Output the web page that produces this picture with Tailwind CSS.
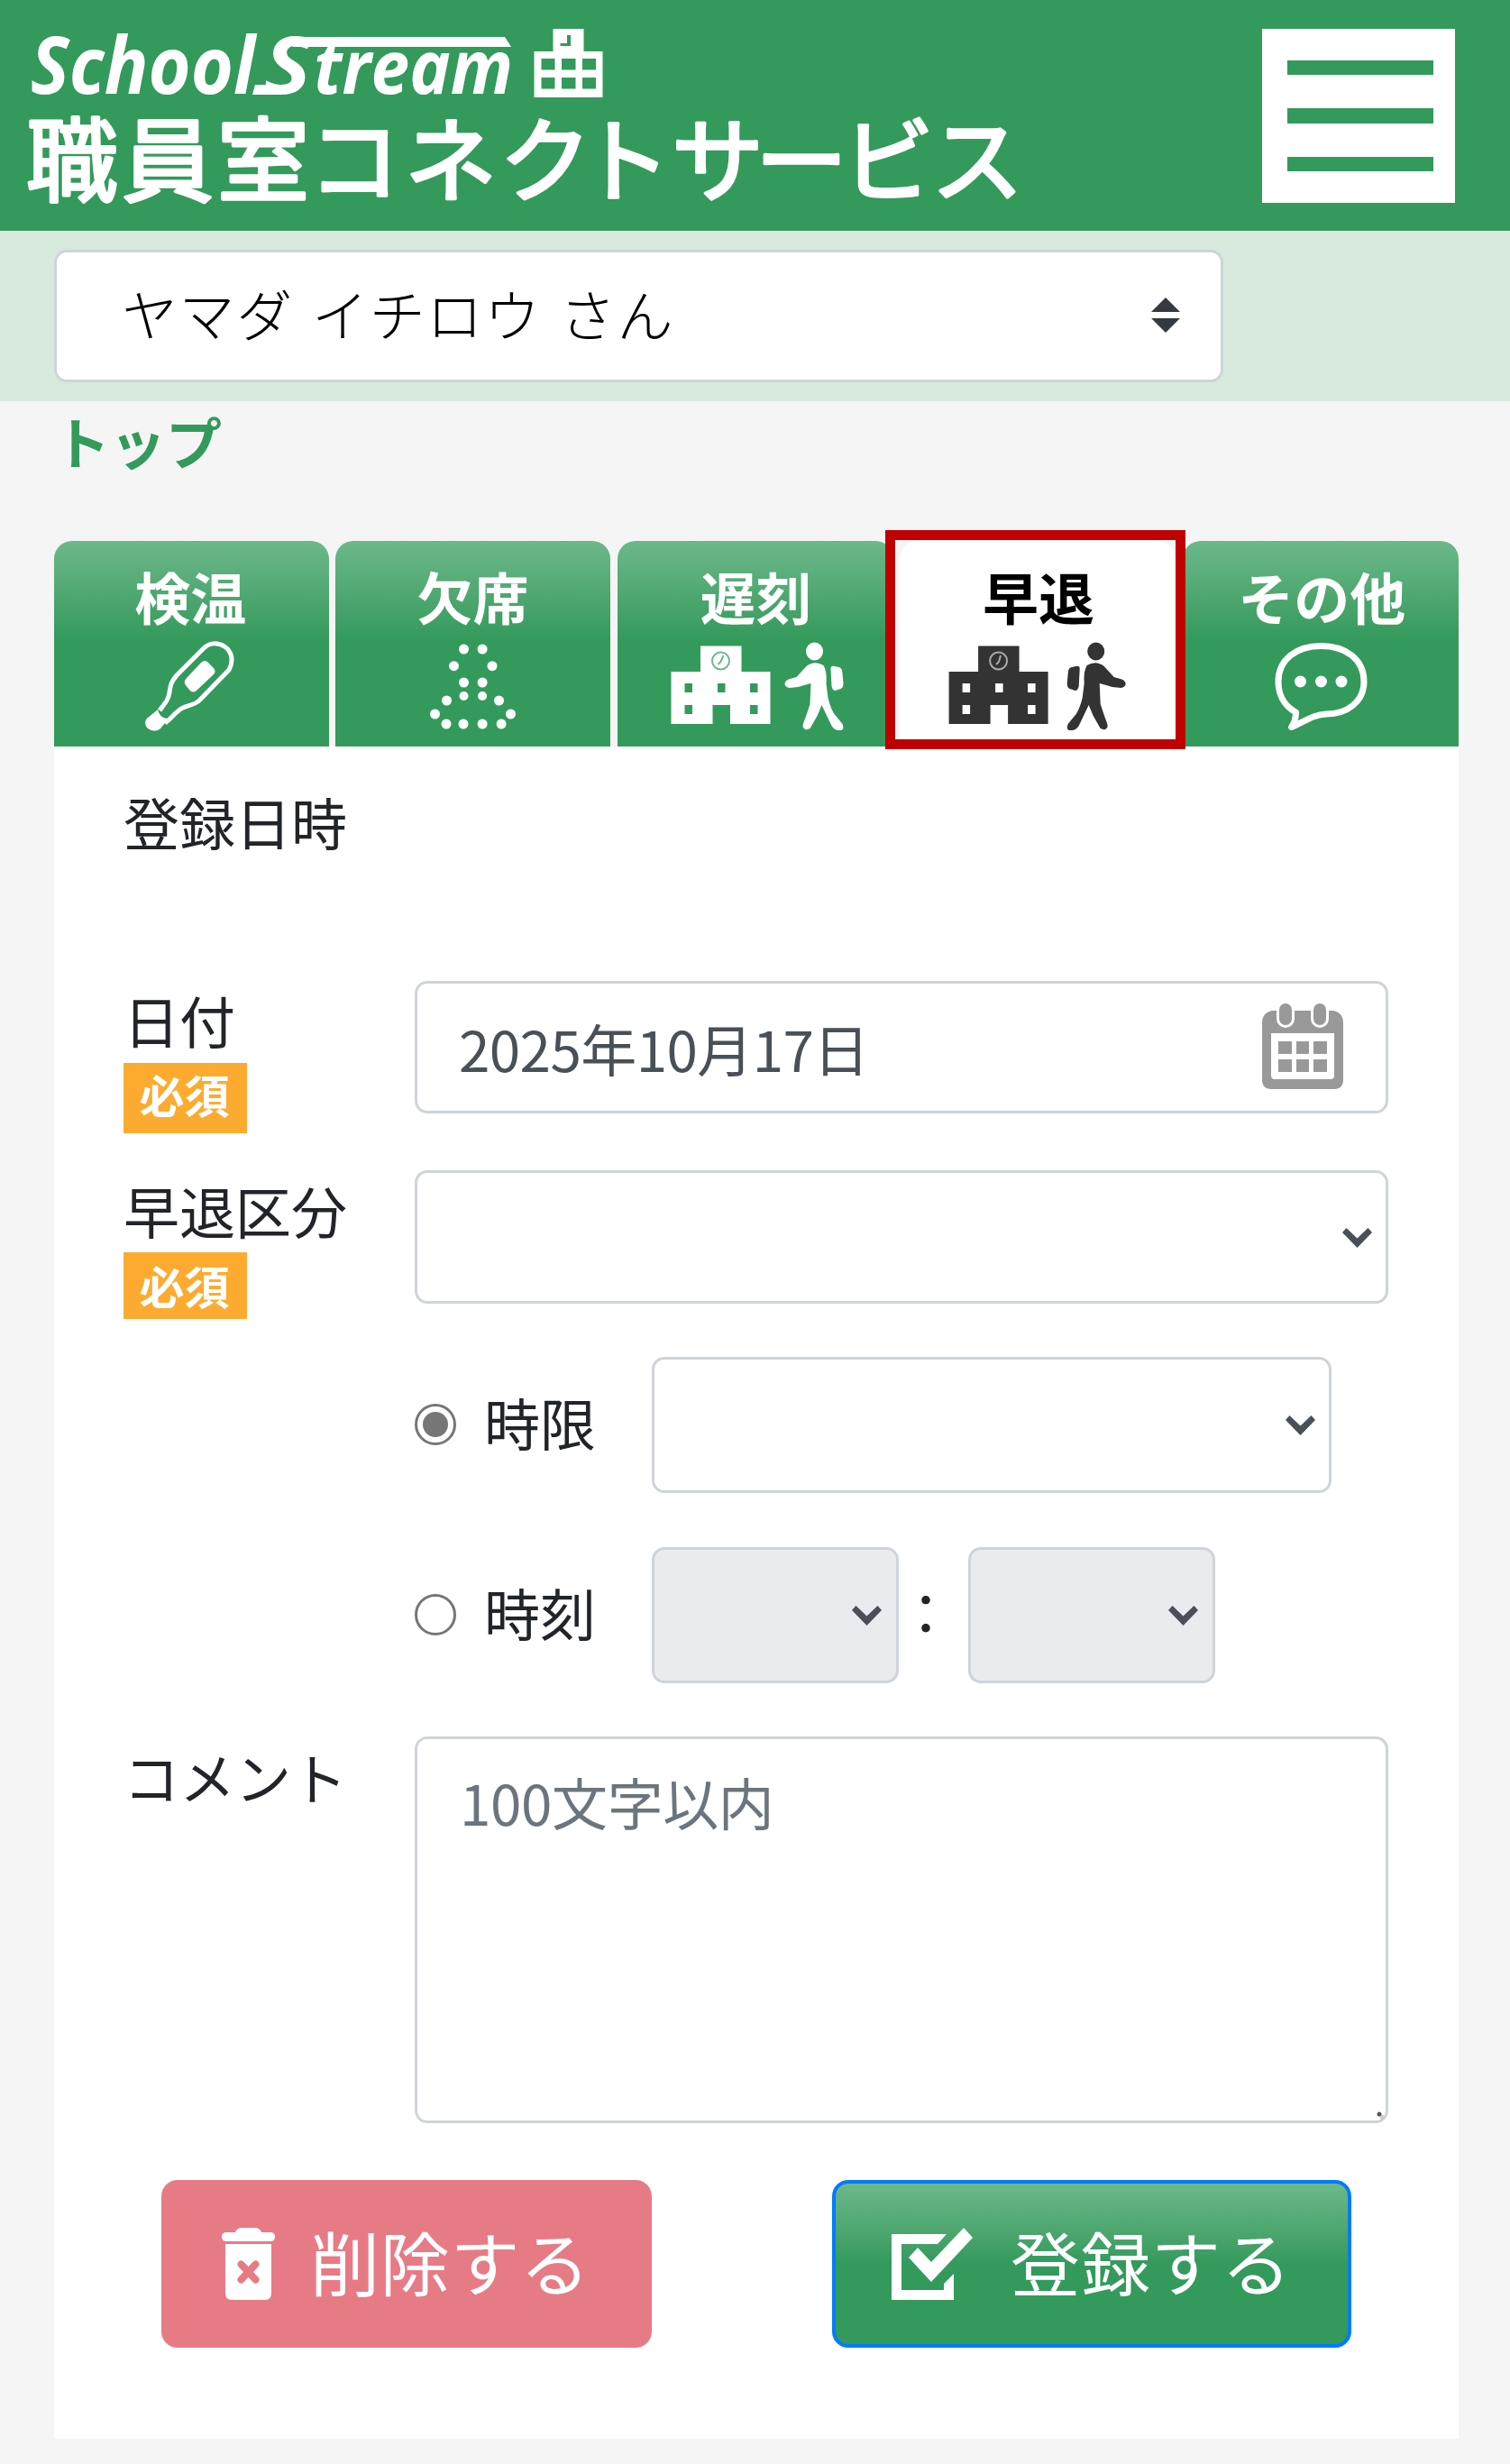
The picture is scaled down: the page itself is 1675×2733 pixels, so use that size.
<!DOCTYPE html>
<html lang="ja">
<head>
<meta charset="utf-8">
<title>職員室コネクトサービス</title>
<script src="https://cdn.jsdelivr.net/npm/@tailwindcss/browser@4"></script>
</head>
<body class="bg-[#f5f5f5] font-['Noto_Sans_CJK_JP',sans-serif] text-[62px] leading-[62px] text-[#212529] w-[1675px] h-[2733px] overflow-hidden">

<header class="bg-[#339a5c] h-[256px] flex items-start justify-between pr-[61px]">
  <svg class="w-[1180px] h-[256px]" viewBox="0 0 1180 256" fill="#fff">
    <g font-family="Open Sans" font-weight="700" font-style="italic" font-size="88">
      <text x="34" y="104" textLength="249" lengthAdjust="spacingAndGlyphs">School</text>
      <text x="293" y="104" textLength="52" lengthAdjust="spacingAndGlyphs">S</text>
      <text x="348" y="104" font-size="82" textLength="221" lengthAdjust="spacingAndGlyphs">tream</text>
    </g>
    <path d="M328 41H560L567 52H325ZM283 94H312V105H280Z"/>
    <path fill-rule="evenodd" d="M613.500 32H647.500V57H668.500V108H592.500V57H613.500ZM600.500 65V77.500H615.500V65ZM623 65V77.500H638.500V65ZM646 65V77.500H661V65ZM600.500 86V98.500H615.500V86ZM623 86V98.500H638.500V86ZM646 86V98.500H661V86ZM629 39V48H621.500V51H633V39Z"/>
    <text y="215.500" x="29 135 241 342 449 554 642 745 838 934 1033" font-family="Noto Sans CJK JP" font-weight="400" font-size="102" stroke="#fff" stroke-width="3.500" stroke-linejoin="round">職員室コネクトサービス</text>
  </svg>
  <button class="mt-[32px] w-[214px] h-[193px] bg-white flex flex-col items-center justify-center gap-[37px] pl-[3px]" aria-label="メニュー">
    <span class="w-[162px] h-[16.500px] bg-[#339a5c]"></span>
    <span class="w-[162px] h-[16.500px] bg-[#339a5c]"></span>
    <span class="w-[162px] h-[16.500px] bg-[#339a5c]"></span>
  </button>
</header>

<div class="bg-[#d7eadd] h-[189px] pt-[21px] pl-[60px]">
  <div class="w-[1297px] h-[147px] bg-white border-[3px] border-[#ced4da] rounded-[14px] flex items-center justify-between pl-[72px] pr-[45px]">
    <span class="text-black font-light whitespace-nowrap tracking-[1.600px] [word-spacing:5px] -mt-[8px]">ヤマダ イチロウ さん</span>
    <svg class="w-[32px] h-[39px] -mt-[3px]" viewBox="0 0 32 39" fill="#343a40"><path d="M16 0L32 16H0ZM16 39L32 23H0Z"/></svg>
  </div>
</div>

<nav class="h-[155px] pl-[60px] pt-[13px]">
  <a class="block h-[62px] font-bold text-[#339a5c]">トップ</a>
</nav>

<div class="ml-[60px] w-[1558px] grid grid-cols-[304.5px_305px_306px_306px_1fr] gap-[7.500px] h-[228px] font-bold text-white text-center relative">
  <div class="rounded-t-[20px] bg-linear-to-b from-[#6cb88a] to-[#339a5c] to-48% pt-[30px]">
    <div class="pr-[2px]">検温</div>
    <svg class="block mt-[10px] w-[305px] h-[126px]" viewBox="0 0 305 126" fill="none" stroke="#fff" stroke-width="5" stroke-linejoin="round">
      <path d="M117 86C123 78 127 74 128 66C129 58 130 54 136 47L166 17C172 11 181 10 189 15C198 21 199 32 194 41L162 74C157 80 149 80 143 83C136 86 131 94 123 100"/>
      <path fill="#fff" stroke="none" d="M115 85C117 93 122 95 127 95L118 106C113 110 107 109 103 105C100 101 101 96 104 94ZM163 33Q167 29 171 33L177 39Q180 43 177 46L159 63Q154 68 150 63L146 58Q143 54 147 50Z"/>
    </svg>
  </div>
  <div class="rounded-t-[20px] bg-linear-to-b from-[#6cb88a] to-[#339a5c] to-48% pt-[30px]">
    <div>欠席</div>
    <svg class="block mt-[10px] w-[305px] h-[126px]" viewBox="-0.5 0 305 126" fill="#fff">
      <circle cx="142" cy="18" r="5.500"/><circle cx="162.600" cy="18" r="5.500"/>
      <circle cx="131" cy="36.700" r="5.500"/><circle cx="173.500" cy="36.700" r="5.500"/>
      <circle cx="142" cy="55" r="5.500"/><circle cx="162.600" cy="55" r="5.500"/>
      <circle cx="142" cy="70" r="5"/><circle cx="162.600" cy="70" r="5"/>
      <circle cx="123" cy="75" r="5.500"/><circle cx="181" cy="75" r="5.500"/>
      <circle cx="110" cy="90" r="5.500"/><circle cx="194" cy="90" r="5.500"/>
      <circle cx="122.500" cy="101" r="5.500"/><circle cx="141.500" cy="101" r="5.500"/><circle cx="162.600" cy="101" r="5.500"/><circle cx="183.600" cy="101" r="5.500"/>
    </svg>
  </div>
  <div class="rounded-t-[20px] bg-linear-to-b from-[#6cb88a] to-[#339a5c] to-48% pt-[30px]">
    <div class="pl-[2px]">遅刻</div>
    <svg class="block mt-[10px] w-[305px] h-[126px]" viewBox="-0.5 0 305 126" fill="#fff">
      <path id="school" fill-rule="evenodd" d="M91.500 14.500H137V43H169V101H124.500V80H105V101H59V43H91.500ZM74 56V66H82.500V56ZM110.500 56V66H119V56ZM146.500 56V66H155V56ZM74 80V90H82.500V80ZM146.500 80V90H155V80Z"/>
      <g fill="none" stroke="#6cb88a" stroke-width="2"><circle cx="114" cy="31" r="9.500"/><path d="M117 25L114 32L111 35"/></g>
      <g id="walker">
        <ellipse cx="218" cy="20.500" rx="9.500" ry="10"/>
        <path d="M209 37Q218 30 228 36Q232 43 231 56L233 72Q236 84 240 90L249 101Q252 109 245 108Q240 108 237 103L226 80L221 92L213 106Q207 109 205 104Q205 101 208 94L213 79L214 56Q206 58 200 60L190 61Q185 60 185 56Q186 52 191 51L198 49Z"/>
        <path d="M236 40Q236 36 240 37L245 38Q249 39 249 45L250 56Q250 61 247 62L241 64Q238 64 237 59Z"/>
      </g>
    </svg>
  </div>
  <div class="rounded-t-[20px] bg-white text-black pt-[30px]">
    <div class="pl-[2px]">早退</div>
    <svg class="block mt-[10px] w-[305px] h-[126px]" viewBox="1 0 305 126" fill="#333">
      <use href="#school" x="-3.400"/>
      <g fill="none" stroke="#aaa" stroke-width="2"><circle cx="110.600" cy="31" r="9.500"/><path d="M113 25L111 32L108 35"/></g>
      <use href="#walker" transform="translate(436.700 0) scale(-1 1)"/>
    </svg>
  </div>
  <div class="rounded-t-[20px] bg-linear-to-b from-[#6cb88a] to-[#339a5c] to-48% pt-[30px]">
    <div class="pl-[3px]">その他</div>
    <svg class="block mt-[10px] w-[305px] h-[126px]" viewBox="1.5 0 305 126">
      <path fill="none" stroke="#fff" stroke-width="7" stroke-linejoin="round" d="M127 88C112 80 107.500 66 107.500 54C107.500 29 128 14.500 155 14.500S202.500 29 202.500 54C202.500 77 183 90 161 90C145 91 138 98 122 104.500C126 99 127 94 127 88Z"/>
      <g fill="#fff"><circle cx="132" cy="54" r="6.500"/><circle cx="155" cy="54" r="6.500"/><circle cx="177.500" cy="54" r="6.500"/></g>
    </svg>
  </div>
  <!-- highlight frame over the current tab -->
  <div class="absolute left-[922px] top-[-12px] w-[333px] h-[243px] border-[11px] border-[#c00000]"></div>
</div>

<main class="ml-[60px] w-[1558px] h-[1877px] bg-white pt-[52px] pl-[77px]">
  <div class="h-[208px]">登録日時</div>

  <div class="flex h-[169px]">
    <div class="w-[323px] pt-[12px]">
      <div>日付</div>
      <div class="mt-[17px] w-[137px] h-[78px] bg-[#fcab30] text-white font-bold text-[50px] leading-[68px] text-center pr-[2px]">必須</div>
    </div>
    <div class="w-[1080px] h-[147px] border-[3px] border-[#ced4da] rounded-[14px] flex items-center justify-between pl-[46px] pr-[47px] text-[#495057]">
      <span class="tracking-[-0.600px]">2025年10月17日</span>
      <svg class="w-[90px] h-[95px] -mt-[3px]" viewBox="0 0 90 95" fill="#999">
        <path fill-rule="evenodd" d="M11 8H79Q90 10 90 22V84Q90 95 80 95H10Q0 95 0 84V22Q0 10 11 8ZM10 33V80Q10 84 14 84H76Q80 84 80 80V33Z"/>
        <g stroke="#fff" stroke-width="3"><rect x="17.500" y="-1.500" width="17" height="27" rx="8.500"/><rect x="55.500" y="-1.500" width="17" height="27" rx="8.500"/></g>
        <path d="M18 42h15v14h-15zM38 42h14v14h-14zM57 42h15v14h-15zM18 62h15v14h-15zM38 62h14v14h-14zM57 62h15v14h-15z"/>
      </svg>
    </div>
  </div>

  <div class="flex h-[165px] mt-[41px]">
    <div class="w-[323px] pt-[13px]">
      <div>早退区分</div>
      <div class="mt-[16px] w-[137px] h-[74px] bg-[#fcab30] text-white font-bold text-[50px] leading-[73px] text-center pr-[2px]">必須</div>
    </div>
    <div class="w-[1080px] h-[148px] border-[3px] border-[#ced4da] rounded-[14px] flex items-center justify-end pr-[15px]">
      <svg class="w-[33px] h-[22px] mt-[2px]" viewBox="0 0 33 22" fill="#495057"><path d="M4.500 0L16.500 11.500L28.500 0L33 5L16.500 22L0 5Z"/></svg>
    </div>
  </div>

  <div class="flex items-center h-[151px] mt-[42px] pl-[323px]">
    <span class="w-[46px] h-[46px] -mt-[2px] rounded-full border-[3px] border-[#767676] flex items-center justify-center"><span class="w-[28px] h-[28px] rounded-full bg-[#767676]"></span></span>
    <span class="ml-[31px] w-[186px] -mt-[7px]">時限</span>
    <div class="w-[754px] h-[151px] border-[3px] border-[#ced4da] rounded-[14px] flex items-center justify-end pr-[15px]">
      <svg class="w-[33px] h-[22px]" viewBox="0 0 33 22" fill="#495057"><path d="M4.500 0L16.500 11.500L28.500 0L33 5L16.500 22L0 5Z"/></svg>
    </div>
  </div>

  <div class="flex items-center h-[151px] mt-[60px] pl-[323px]">
    <span class="w-[46px] h-[46px] -mt-[2px] rounded-full border-[3px] border-[#767676]"></span>
    <span class="ml-[31px] w-[186px] -mt-[7px]">時刻</span>
    <div class="w-[274px] h-[151px] border-[3px] border-[#ced4da] bg-[#e9ecef] rounded-[14px] flex items-center justify-end pr-[16px]">
      <svg class="w-[33px] h-[22px]" viewBox="0 0 33 22" fill="#495057"><path d="M4.500 0L16.500 11.500L28.500 0L33 5L16.500 22L0 5Z"/></svg>
    </div>
    <span class="w-[62px] -ml-[1px] mr-[16px] -mt-[9px] text-center">：</span>
    <div class="w-[274px] h-[151px] border-[3px] border-[#ced4da] bg-[#e9ecef] rounded-[14px] flex items-center justify-end pr-[16px]">
      <svg class="w-[33px] h-[22px]" viewBox="0 0 33 22" fill="#495057"><path d="M4.500 0L16.500 11.500L28.500 0L33 5L16.500 22L0 5Z"/></svg>
    </div>
  </div>

  <div class="flex h-[429px] mt-[59px]">
    <div class="w-[323px] pt-[13px]">コメント</div>
    <div class="relative w-[1080px] border-[3px] border-[#ced4da] rounded-[14px] pl-[47px] pt-[38px] text-[#6c757d] tracking-[-0.400px]">100文字以内
      <svg class="absolute right-0 bottom-0 w-[12px] h-[12px]" viewBox="0 0 12 12"><circle cx="5" cy="5" r="2.500" fill="#555"/><circle cx="8.500" cy="8.500" r="2.500" fill="#ccc"/></svg>
    </div>
  </div>

  <div class="flex mt-[63px] pl-[42px] gap-[200px] text-white text-[77px] leading-[77px]">
    <button class="w-[544px] h-[186px] rounded-[18px] bg-[#e77b85] flex items-center pl-[67px]">
      <svg class="w-[59px] h-[80px]" viewBox="0 0 59 80" fill="#fff">
        <path d="M5 5H15Q17 0 22 0H37Q42 0 44 5H54Q59 5 59 10Q59 15 54 15H5Q0 15 0 10Q0 5 5 5Z"/>
        <path d="M4 18H55V72Q55 80 48 80H11Q4 80 4 72Z"/>
        <path d="M21.500 40.500L37.500 57.500M37.500 40.500L21.500 57.500" stroke="#e77b85" stroke-width="8" stroke-linecap="round"/>
      </svg>
      <span class="ml-[39px] -mt-[7px] tracking-[0.700px]">削除する</span>
    </button>
    <button class="w-[576px] h-[186px] rounded-[18px] border-4 border-[#007bff] bg-linear-to-b from-[#6cb88a] to-[#339a5c] to-50% flex items-center pl-[62px]">
      <svg class="w-[91px] h-[80px]" viewBox="0 0 91 80" fill="#fff">
        <path d="M0 7H61L51 18H11V69H58V62L69 51V80H0Z"/>
        <path d="M19 33L29 22L44 38L80 0L90 11L44 60Z"/>
      </svg>
      <span class="ml-[41px] -mt-[7px] tracking-[1px]">登録する</span>
    </button>
  </div>
</main>
</body>
</html>
